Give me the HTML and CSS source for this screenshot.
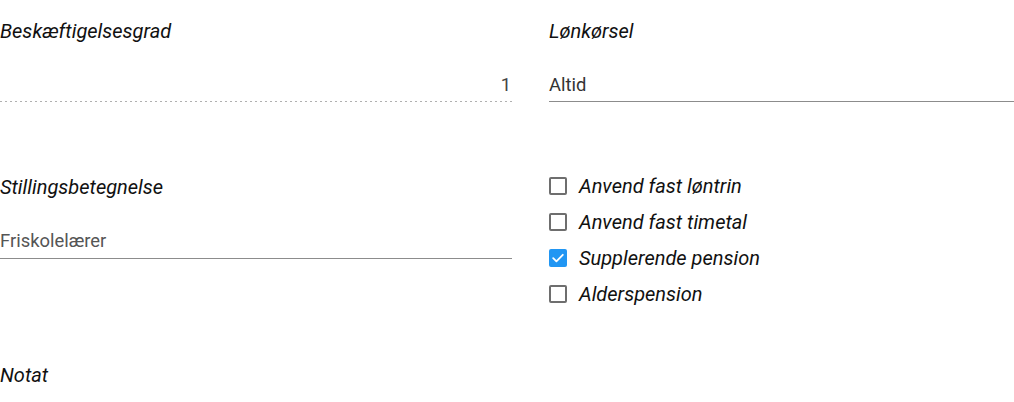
FILE: index.html
```html
<!DOCTYPE html>
<html lang="da">
<head>
<meta charset="utf-8">
<link rel="stylesheet" href="styles.css">
</head>
<body>
<div class="form">
  <div class="field">
    <div class="label">Beskæftigelsesgrad</div>
    <div class="input input-disabled input-number">1</div>
  </div>
  <div class="field">
    <div class="label">Lønkørsel</div>
    <div class="input">Altid</div>
  </div>
  <div class="field field-second">
    <div class="label">Stillingsbetegnelse</div>
    <div class="input input-muted">Friskolelærer</div>
  </div>
  <div class="checks">
    <div class="check"><span class="box"></span><span class="check-label">Anvend fast løntrin</span></div>
    <div class="check"><span class="box"></span><span class="check-label">Anvend fast timetal</span></div>
    <div class="check"><span class="box box-on"><svg viewBox="0 0 18 18" width="18" height="18"><path d="M4.2 9.2l3.2 3.2 6.4-6.6" fill="none" stroke="#fff" stroke-width="1.8" stroke-linecap="round" stroke-linejoin="round"/></svg></span><span class="check-label">Supplerende pension</span></div>
    <div class="check"><span class="box"></span><span class="check-label">Alderspension</span></div>
  </div>
  <div class="field field-notat">
    <div class="label">Notat</div>
  </div>
</div>
</body>
</html>
```
FILE: styles.css
```css
html, body {
  margin: 0;
  padding: 0;
  background: #fff;
}
body {
  font-family: Roboto, "Noto Sans", sans-serif;
  color: #111;
  overflow: hidden;
}
.form {
  display: grid;
  grid-template-columns: 512px 465px;
  column-gap: 37px;
  row-gap: 0;
  padding-top: 19px;
}
.field {
  display: flex;
  flex-direction: column;
}
.label {
  font-size: 20px;
  font-style: italic;
  line-height: 24px;
  color: #111;
}
.input {
  margin-top: 30px;
  font-size: 18.4px;
  line-height: 24px;
  padding-bottom: 4px;
  border-bottom: 1px solid #8c8c8c;
  color: #333;
}
.input-disabled {
  border-bottom: none;
  padding-bottom: 5px;
  background-image: linear-gradient(to right, #b0b0b0 0, #b0b0b0 2px, transparent 2px);
  background-size: 5px 1px;
  background-repeat: repeat-x;
  background-position: left bottom;
  color: #444;
}
.input-number {
  text-align: right;
  padding-right: 1px;
}
.input-muted {
  color: #555;
}
.field-second {
  margin-top: 73px;
}
.field-second .input {
  padding-bottom: 5px;
}
.checks {
  margin-top: 72px;
  display: flex;
  flex-direction: column;
  gap: 12px;
}
.check {
  display: flex;
  align-items: center;
  gap: 12px;
  height: 24px;
}
.box {
  width: 18px;
  height: 18px;
  box-sizing: border-box;
  border: 2px solid #6e6e6e;
  border-radius: 2px;
  display: flex;
  align-items: center;
  justify-content: center;
}
.box-on {
  border: none;
  background: #2196f3;
}
.check-label {
  font-size: 20px;
  font-style: italic;
  line-height: 24px;
  color: #111;
}
.field-notat {
  grid-column: 1 / 3;
  margin-top: 57px;
}
```
